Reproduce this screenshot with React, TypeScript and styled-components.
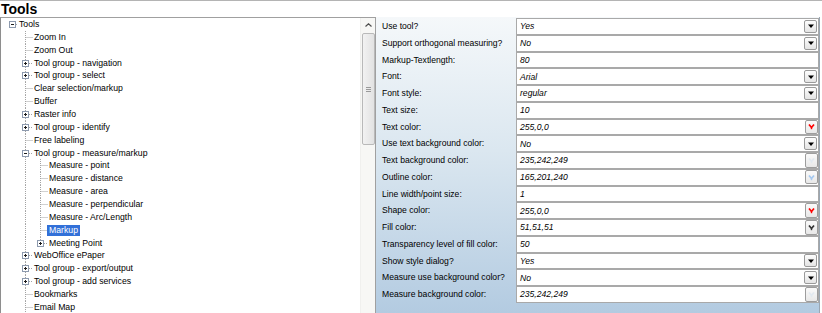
import React from "react";
import styled, { createGlobalStyle } from "styled-components";

const GlobalStyle = createGlobalStyle`
  html, body {
    margin: 0;
    padding: 0;
    background: #ffffff;
    overflow: hidden;
  }
  body {
    font-family: "Liberation Sans", Arial, sans-serif;
  }
`;

const ROW_H = 12.86;
const MID = 6.5;
const LINE_X = [11.5, 24.5, 39.5];
const DOT = "#a3a3a3";

type TreeItem = {
  label: string;
  level: number;
  box?: "+" | "-";
  selected?: boolean;
  last?: boolean;
};

const TREE: TreeItem[] = [
  { label: "Tools", level: 0, box: "-" },
  { label: "Zoom In", level: 1 },
  { label: "Zoom Out", level: 1 },
  { label: "Tool group - navigation", level: 1, box: "+" },
  { label: "Tool group - select", level: 1, box: "+" },
  { label: "Clear selection/markup", level: 1 },
  { label: "Buffer", level: 1 },
  { label: "Raster info", level: 1, box: "+" },
  { label: "Tool group - identify", level: 1, box: "+" },
  { label: "Free labeling", level: 1 },
  { label: "Tool group - measure/markup", level: 1, box: "-" },
  { label: "Measure - point", level: 2 },
  { label: "Measure - distance", level: 2 },
  { label: "Measure - area", level: 2 },
  { label: "Measure - perpendicular", level: 2 },
  { label: "Measure - Arc/Length", level: 2 },
  { label: "Markup", level: 2, selected: true },
  { label: "Meeting Point", level: 2, box: "+", last: true },
  { label: "WebOffice ePaper", level: 1, box: "+" },
  { label: "Tool group - export/output", level: 1, box: "+" },
  { label: "Tool group - add services", level: 1, box: "+" },
  { label: "Bookmarks", level: 1 },
  { label: "Email Map", level: 1 },
];

type PropKind = "drop" | "text" | "color";

type PropItem = {
  label: string;
  value: string;
  kind: PropKind;
  swatch?: string;
};

const PROPS: PropItem[] = [
  { label: "Use tool?", value: "Yes", kind: "drop" },
  { label: "Support orthogonal measuring?", value: "No", kind: "drop" },
  { label: "Markup-Textlength:", value: "80", kind: "text" },
  { label: "Font:", value: "Arial", kind: "drop" },
  { label: "Font style:", value: "regular", kind: "drop" },
  { label: "Text size:", value: "10", kind: "text" },
  { label: "Text color:", value: "255,0,0", kind: "color", swatch: "rgb(255,0,0)" },
  { label: "Use text background color:", value: "No", kind: "drop" },
  { label: "Text background color:", value: "235,242,249", kind: "color", swatch: "rgb(235,242,249)" },
  { label: "Outline color:", value: "165,201,240", kind: "color", swatch: "rgb(165,201,240)" },
  { label: "Line width/point size:", value: "1", kind: "text" },
  { label: "Shape color:", value: "255,0,0", kind: "color", swatch: "rgb(255,0,0)" },
  { label: "Fill color:", value: "51,51,51", kind: "color", swatch: "rgb(51,51,51)" },
  { label: "Transparency level of fill color:", value: "50", kind: "text" },
  { label: "Show style dialog?", value: "Yes", kind: "drop" },
  { label: "Measure use background color?", value: "No", kind: "drop" },
  { label: "Measure background color:", value: "235,242,249", kind: "color", swatch: "rgb(235,242,249)" },
];

const Page = styled.div`
  width: 822px;
  height: 313px;
  display: flex;
  flex-direction: column;
  border-top: 1px solid #b4b4b4;
  box-sizing: border-box;
`;

const TitleBar = styled.div`
  height: 16px;
  line-height: 16px;
  padding-left: 1px;
  font-size: 14px;
  font-weight: bold;
  color: #000;
`;

const Body = styled.div`
  flex: 1;
  min-height: 0;
  display: flex;
`;

const TreePanel = styled.div`
  width: 376px;
  box-sizing: border-box;
  display: flex;
  border-left: 1px solid #8e8e8e;
  border-top: 1px solid #a0a0a0;
  border-right: 1px solid #a0a0a0;
  background: #ffffff;
`;

const TreeList = styled.div`
  flex: 1;
  overflow: hidden;
`;

const TreeRow = styled.div`
  height: ${ROW_H}px;
  display: flex;
  align-items: center;
  white-space: nowrap;
`;

const TreeLabel = styled.span<{ $selected?: boolean }>`
  font-size: 8.7px;
  line-height: 11px;
  padding: 0 2px;
  margin-left: -1px;
  color: ${(p) => (p.$selected ? "#ffffff" : "#000000")};
  background: ${(p) => (p.$selected ? "#3270d8" : "transparent")};
`;

const ScrollTrack = styled.div`
  width: 15px;
  display: flex;
  flex-direction: column;
  align-items: center;
  background: #f7f7f5;
  border-left: 1px solid #f0f0ee;
  box-sizing: border-box;
`;

const ScrollArrow = styled.div`
  height: 14px;
  width: 100%;
  display: flex;
  align-items: center;
  justify-content: center;
`;

const ScrollThumb = styled.div`
  margin-top: 1px;
  width: 13px;
  height: 112px;
  box-sizing: border-box;
  border: 1px solid #b9b9b9;
  border-radius: 2px;
  background: linear-gradient(to right, #f2f2f2, #e2e2e2);
  display: flex;
  align-items: center;
  justify-content: center;
`;

const PropPanel = styled.div`
  width: 444px;
  box-sizing: border-box;
  border-right: 1px solid #9aa6b2;
  background: linear-gradient(to bottom, #f5f8fa 0%, #dbe7f0 45%, #b3cbe1 100%);
  padding-top: 1px;
`;

const PropRow = styled.div`
  height: 16.75px;
  display: grid;
  grid-template-columns: 140px 1fr;
`;

const PropLabel = styled.div`
  padding-left: 6px;
  font-size: 8.6px;
  line-height: 16.75px;
  color: #000;
  white-space: nowrap;
  overflow: hidden;
`;

const ValueBox = styled.div`
  box-sizing: border-box;
  height: 16.75px;
  border: 1px solid #a9a9a9;
  background: #ffffff;
  display: flex;
  align-items: center;
  padding-left: 3px;
`;

const ValueText = styled.span`
  flex: 1;
  font-size: 8.6px;
  font-style: italic;
  color: #000;
`;

const DropButton = styled.div`
  width: 13px;
  height: 13px;
  margin-right: 1px;
  box-sizing: border-box;
  border: 1px solid #9a9a9a;
  border-radius: 2px;
  background: linear-gradient(to bottom, #fdfdfd, #e4e4e4);
  display: flex;
  align-items: center;
  justify-content: center;
`;

const ColorButton = styled.div`
  width: 13px;
  height: 14.5px;
  margin-right: 0px;
  box-sizing: border-box;
  border: 1px solid #9d9d9d;
  border-radius: 2px;
  background: linear-gradient(to bottom, #fafafa, #e8e8e8);
  display: flex;
  align-items: center;
  justify-content: center;
`;

const Guides = ({ item }: { item: TreeItem }) => {
  const { level, box, last } = item;
  const w = 19 + level * 15 - 2;
  const cx = LINE_X[level];
  const hStart = box ? cx + 3.5 : cx;
  return (
    <svg width={w} height={ROW_H} style={{ flex: "none", display: "block" }}>
      {level >= 1 && (
        <line x1={24.5} y1={0} x2={24.5} y2={ROW_H} stroke={DOT} strokeDasharray="1 1" />
      )}
      {level === 2 && (
        <line x1={39.5} y1={0} x2={39.5} y2={last ? MID : ROW_H} stroke={DOT} strokeDasharray="1 1" />
      )}
      <line x1={hStart} y1={MID} x2={w} y2={MID} stroke={DOT} strokeDasharray="1 1" />
      {box && (
        <g>
          <rect x={cx - 3} y={MID - 3} width={6} height={6} fill="#ffffff" stroke="#8d9aae" />
          <line x1={cx - 1.5} y1={MID} x2={cx + 1.5} y2={MID} stroke="#1c1c1c" />
          {box === "+" && (
            <line x1={cx} y1={MID - 1.5} x2={cx} y2={MID + 1.5} stroke="#1c1c1c" />
          )}
        </g>
      )}
    </svg>
  );
};

const DropArrow = () => (
  <svg width="6" height="4" viewBox="0 0 6 4">
    <path d="M0 0.5h6l-3 3.5z" fill="#000" />
  </svg>
);

const ColorChevron = ({ color }: { color: string }) => (
  <svg width="7" height="7" viewBox="0 0 7 7">
    <path d="M1 1.5 L3.5 4.5 L6 1.5" fill="none" stroke={color} strokeWidth="1.7" />
    <rect x="2.8" y="4.6" width="1.4" height="1.6" fill={color} />
  </svg>
);

const chevronTint = (swatch: string) =>
  swatch === "rgb(235,242,249)" ? "#e2e9f0" : swatch;

export default function App() {
  return (
    <>
      <GlobalStyle />
      <Page>
        <TitleBar>Tools</TitleBar>
        <Body>
          <TreePanel>
            <TreeList>
              {TREE.map((item) => (
                <TreeRow key={item.label}>
                  <Guides item={item} />
                  <TreeLabel $selected={item.selected}>{item.label}</TreeLabel>
                </TreeRow>
              ))}
            </TreeList>
            <ScrollTrack>
              <ScrollArrow>
                <svg width="7" height="4" viewBox="0 0 7 4">
                  <path d="M0.5 3.5 L3.5 0.8 L6.5 3.5" fill="none" stroke="#4d4d4d" strokeWidth="1.2" />
                </svg>
              </ScrollArrow>
              <ScrollThumb>
                <svg width="5" height="5" viewBox="0 0 5 5">
                  <path d="M0 0.5h5M0 2.5h5M0 4.5h5" stroke="#9a9a9a" strokeWidth="1" />
                </svg>
              </ScrollThumb>
            </ScrollTrack>
          </TreePanel>
          <PropPanel>
            {PROPS.map((p) => (
              <PropRow key={p.label}>
                <PropLabel>{p.label}</PropLabel>
                <ValueBox>
                  <ValueText>{p.value}</ValueText>
                  {p.kind === "drop" && (
                    <DropButton>
                      <DropArrow />
                    </DropButton>
                  )}
                  {p.kind === "color" && p.swatch && (
                    <ColorButton>
                      <ColorChevron color={chevronTint(p.swatch)} />
                    </ColorButton>
                  )}
                </ValueBox>
              </PropRow>
            ))}
          </PropPanel>
        </Body>
      </Page>
    </>
  );
}
